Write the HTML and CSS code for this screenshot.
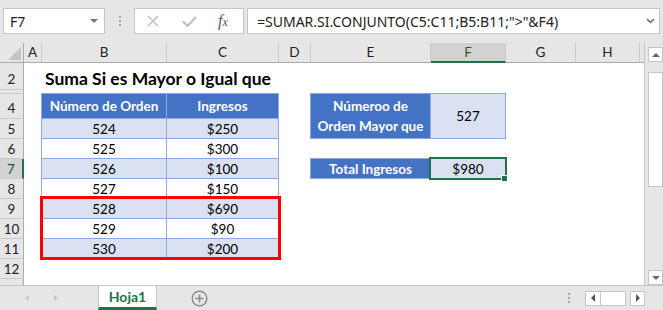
FILE: index.html
```html
<!DOCTYPE html>
<html lang="es">
<head>
    <meta charset="UTF-8">
    <title>Suma Si es Mayor o Igual que</title>
    <link rel="stylesheet" href="styles.css">
</head>
<body>
<div class="app">
    <!-- barra de fórmulas -->
    <div class="toolbar">
        <div class="namebox"><span>F7</span><span class="caret-down"></span></div>
        <div class="vdots"><i></i><i></i><i></i></div>
        <div class="fxbox">
            <svg class="ico-x" width="12" height="12" viewBox="0 0 12 12"><path d="M1 1L11 11M11 1L1 11" stroke="#bdbdbd" stroke-width="1.4"/></svg>
            <svg class="ico-check" width="15" height="11" viewBox="0 0 15 11"><path d="M1 5.5L5.5 10L14 1" fill="none" stroke="#bdbdbd" stroke-width="2"/></svg>
            <span class="fx">f<span class="fx-x">x</span></span>
        </div>
        <div class="formula">
            <span>=SUMAR.SI.CONJUNTO(C5:C11;B5:B11;"&gt;"&amp;F4)</span>
            <svg width="9" height="6" viewBox="0 0 9 6"><path d="M1 1L4.5 4.5L8 1" fill="none" stroke="#666" stroke-width="1.5"/></svg>
        </div>
    </div>

    <div class="main">
        <div class="sheet">
            <div class="corner"><span class="corner-tri"></span></div>
            <div class="colheads">
                <div class="ch w-a">A</div>
                <div class="ch w-b">B</div>
                <div class="ch w-c">C</div>
                <div class="ch w-d">D</div>
                <div class="ch w-e">E</div>
                <div class="ch w-f sel">F</div>
                <div class="ch w-g">G</div>
                <div class="ch w-h">H</div>
                <div class="ch w-i"></div>
            </div>
            <div class="rowheads">
                <div class="rh h-2">2</div>
                <div class="rh h-3"></div>
                <div class="rh h-4">4</div>
                <div class="rh">5</div>
                <div class="rh">6</div>
                <div class="rh sel">7</div>
                <div class="rh">8</div>
                <div class="rh">9</div>
                <div class="rh">10</div>
                <div class="rh">11</div>
                <div class="rh">12</div>
                <div class="rh h-13"></div>
            </div>
            <div class="cells">
                <div class="title">Suma Si es Mayor o Igual que</div>

                <div class="tbl-left">
                    <div class="c hd">Número de Orden</div>
                    <div class="c hd">Ingresos</div>
                    <div class="c alt">524</div>
                    <div class="c alt">$250</div>
                    <div class="c">525</div>
                    <div class="c">$300</div>
                    <div class="c alt">526</div>
                    <div class="c alt">$100</div>
                    <div class="c">527</div>
                    <div class="c">$150</div>
                    <div class="c alt">528</div>
                    <div class="c alt">$690</div>
                    <div class="c">529</div>
                    <div class="c">$90</div>
                    <div class="c alt">530</div>
                    <div class="c alt">$200</div>
                    <div class="highlight"></div>
                </div>

                <div class="tbl-right">
                    <div class="c hd two">Númeroo de<br>Orden Mayor que</div>
                    <div class="c alt">527</div>
                </div>

                <div class="tbl-total">
                    <div class="c hd">Total Ingresos</div>
                    <div class="c alt">$980</div>
                    <div class="selbox"></div>
                    <div class="handle"></div>
                </div>
            </div>
        </div>
        <div class="vscroll">
            <div class="sbtn"><span class="tri-up"></span></div>
            <div class="thumb"></div>
            <div class="track"></div>
            <div class="sbtn"><span class="tri-down"></span></div>
        </div>
    </div>

    <!-- pestañas -->
    <div class="tabbar">
        <span class="nav-left"></span>
        <span class="nav-right"></span>
        <div class="tab">Hoja1</div>
        <svg class="addsheet" width="17" height="17" viewBox="0 0 17 17"><circle cx="8.5" cy="8.5" r="7.3" fill="none" stroke="#8a8a8a" stroke-width="1.4"/><path d="M8.5 4.5V12.5M4.5 8.5H12.5" stroke="#8a8a8a" stroke-width="1.6"/></svg>
        <div class="vdots small"><i></i><i></i><i></i></div>
        <div class="hscroll">
            <div class="hbtn"><span class="tri-left"></span></div>
            <div class="hthumb"></div>
            <div class="hbtn gap"><span class="tri-right"></span></div>
        </div>
    </div>
</div>
</body>
</html>
```

FILE: styles.css
```css
* {
    box-sizing: border-box;
}

body {
    margin: 0;
    background-color: #e6e6e6;
    font-family: Lato, 'Liberation Sans', sans-serif;
}

.app {
    width: 663px;
    height: 310px;
    overflow: hidden;
    display: flex;
    flex-direction: column;
}

/* barra superior */
.toolbar {
    height: 43px;
    flex: none;
    display: flex;
    align-items: flex-start;
    padding: 8px 0 0 3px;
    font-family: 'Noto Sans', 'Open Sans', sans-serif;
}

.namebox {
    width: 102px;
    height: 26px;
    background-color: #fff;
    border: 1px solid #c6c6c6;
    display: flex;
    align-items: center;
    justify-content: space-between;
    padding: 0 6px 0 6px;
    font-size: 14px;
    color: #222;
}

.caret-down {
    width: 0;
    height: 0;
    border-left: 4px solid transparent;
    border-right: 4px solid transparent;
    border-top: 4px solid #777;
}

.vdots {
    margin: 8px 0 0 14px;
    display: flex;
    flex-direction: column;
    gap: 2px;
}

.vdots i {
    display: block;
    width: 2px;
    height: 2px;
    background-color: #a6a6a6;
}

.fxbox {
    width: 110px;
    height: 26px;
    margin-left: 13px;
    background-color: #fff;
    border: 1px solid #c6c6c6;
    display: flex;
    align-items: center;
    padding-left: 12px;
}

.ico-check {
    margin-left: 23px;
}

.fx {
    margin-left: 21px;
    font-family: 'Liberation Serif', serif;
    font-style: italic;
    font-size: 16px;
    color: #555;
}

.fx-x {
    font-size: 12px;
}

.formula {
    width: 413px;
    height: 26px;
    margin-left: 3px;
    background-color: #fff;
    border: 1px solid #c6c6c6;
    display: flex;
    align-items: center;
    justify-content: space-between;
    padding: 0 4px 0 9px;
    font-size: 14px;
    color: #222;
}

/* hoja */
.main {
    height: 242px;
    flex: none;
    display: flex;
}

.sheet {
    width: 645px;
    background-color: #fff;
    border-right: 1px solid #c6c6c6;
    display: grid;
    grid-template-columns: 24px 1fr;
    grid-template-rows: 20px 1fr;
}

.corner {
    background-color: #e6e6e6;
    border-right: 1px solid #ababab;
    border-bottom: 1px solid #ababab;
    display: flex;
    align-items: flex-end;
    justify-content: flex-end;
    padding: 0 2px 2px 0;
}

.corner-tri {
    width: 0;
    height: 0;
    border-left: 13px solid transparent;
    border-bottom: 13px solid #c4c4c4;
}

.colheads {
    display: flex;
}

.ch {
    flex: none;
    height: 20px;
    background-color: #e6e6e6;
    border-right: 1px solid #cacaca;
    border-bottom: 1px solid #ababab;
    text-align: center;
    font-size: 13.5px;
    line-height: 19px;
    color: #222;
}

.ch.sel {
    background-color: #d2d2d2;
    border-bottom: 2px solid #217346;
    color: #1e5a36;
}

.w-a { width: 18px; }
.w-b { width: 125px; }
.w-c { width: 112px; }
.w-d { width: 32px; }
.w-e { width: 120px; }
.w-f { width: 75px; }
.w-g { width: 70px; }
.w-h { width: 64px; }
.w-i { flex: 1; border-right: none; }

.rowheads {
    display: flex;
    flex-direction: column;
}

.rh {
    flex: none;
    height: 20px;
    overflow: hidden;
    background-color: #e6e6e6;
    border-right: 1px solid #ababab;
    border-bottom: 1px solid #cacaca;
    display: flex;
    align-items: flex-end;
    justify-content: center;
    font-size: 13.5px;
    line-height: 18px;
    color: #222;
}

.rh.sel {
    background-color: #d2d2d2;
    border-right: 2px solid #217346;
    color: #1e5a36;
}

.h-2 { height: 27px; padding-bottom: 1px; }
.h-3 { height: 4px; }
.h-4 { height: 25px; padding-bottom: 1px; }
.h-13 { flex: 1; border-bottom: none; }

.cells {
    display: grid;
    grid-template-columns: 18px 125px 112px 32px 120px 75px 70px 64px 1fr;
    grid-template-rows: 27px 4px 25px repeat(8, 20px) 1fr;
}

.title {
    grid-column: 2 / 5;
    grid-row: 1;
    align-self: end;
    padding-left: 3px;
    font-size: 17.5px;
    font-weight: bold;
    line-height: 22px;
    color: #000;
}

/* tablas */
.tbl-left,
.tbl-right,
.tbl-total {
    position: relative;
    margin: -1px 0 0 -1px;
    display: grid;
    border-left: 1px solid #8ea9db;
    border-top: 1px solid #8ea9db;
}

.tbl-left {
    grid-column: 2 / 4;
    grid-row: 3 / 11;
    grid-template-columns: 125px 112px;
    grid-template-rows: 25px repeat(7, 20px);
}

.tbl-right {
    grid-column: 5 / 7;
    grid-row: 3 / 5;
    grid-template-columns: 120px 75px;
}

.tbl-total {
    grid-column: 5 / 7;
    grid-row: 6;
    grid-template-columns: 120px 75px;
}

.c {
    border-right: 1px solid #8ea9db;
    border-bottom: 1px solid #8ea9db;
    display: flex;
    align-items: center;
    justify-content: center;
    text-align: center;
    font-size: 13.5px;
    color: #000;
    background-color: #fff;
}

.c.hd {
    background-color: #4472c4;
    color: #fff;
    font-weight: bold;
}

.c.alt {
    background-color: #d9e1f2;
}

.c.two {
    line-height: 20px;
}

.highlight {
    position: absolute;
    left: -2px;
    top: 102px;
    width: 241px;
    height: 64px;
    border: 3px solid #ff0000;
}

.selbox {
    position: absolute;
    left: -2px;
    top: -2px;
    width: 78px;
    height: 23px;
    border: 2px solid #217346;
    margin-left: 120px;
}

.handle {
    position: absolute;
    left: 190px;
    top: 16px;
    width: 7px;
    height: 7px;
    background-color: #217346;
    border: 1px solid #fff;
}

/* barra de desplazamiento */
.vscroll {
    width: 18px;
    display: flex;
    flex-direction: column;
    padding: 4px 0 0 3px;
}

.sbtn {
    width: 15px;
    height: 15px;
    flex: none;
    background-color: #fff;
    border: 1px solid #c6c6c6;
    display: flex;
    align-items: center;
    justify-content: center;
}

.tri-up {
    border-left: 4px solid transparent;
    border-right: 4px solid transparent;
    border-bottom: 4px solid #666;
}

.tri-down {
    border-left: 4px solid transparent;
    border-right: 4px solid transparent;
    border-top: 4px solid #666;
}

.thumb {
    width: 15px;
    height: 115px;
    flex: none;
    margin-top: 10px;
    background-color: #fff;
    border: 1px solid #c6c6c6;
}

.track {
    flex: 1;
}

/* pestañas */
.tabbar {
    flex: 1;
    display: flex;
    align-items: center;
    border-top: 1px solid #c6c6c6;
}

.nav-left {
    margin-left: 25px;
    border-top: 3px solid transparent;
    border-bottom: 3px solid transparent;
    border-right: 4px solid #c8c8c8;
}

.nav-right {
    margin-left: 25px;
    border-top: 3px solid transparent;
    border-bottom: 3px solid transparent;
    border-left: 4px solid #c8c8c8;
}

.tab {
    align-self: stretch;
    margin-left: 40px;
    width: 59px;
    background-color: #fff;
    border-left: 1px solid #c6c6c6;
    border-right: 1px solid #c6c6c6;
    border-bottom: 3px solid #217346;
    display: flex;
    align-items: center;
    justify-content: center;
    font-size: 14px;
    font-weight: bold;
    color: #217346;
}

.addsheet {
    margin-left: 34px;
}

.vdots.small {
    margin: 0 0 0 auto;
}

.hscroll {
    display: flex;
    margin: 0 18px 0 15px;
}

.hbtn {
    width: 16px;
    height: 15px;
    background-color: #fff;
    border: 1px solid #c6c6c6;
    display: flex;
    align-items: center;
    justify-content: center;
}

.hbtn.gap {
    margin-left: 4px;
    width: 15px;
}

.hthumb {
    width: 25px;
    height: 15px;
    background-color: #fff;
    border: 1px solid #c6c6c6;
    border-left: none;
}

.tri-left {
    border-top: 4px solid transparent;
    border-bottom: 4px solid transparent;
    border-right: 4px solid #555;
}

.tri-right {
    border-top: 4px solid transparent;
    border-bottom: 4px solid transparent;
    border-left: 4px solid #555;
}
```
